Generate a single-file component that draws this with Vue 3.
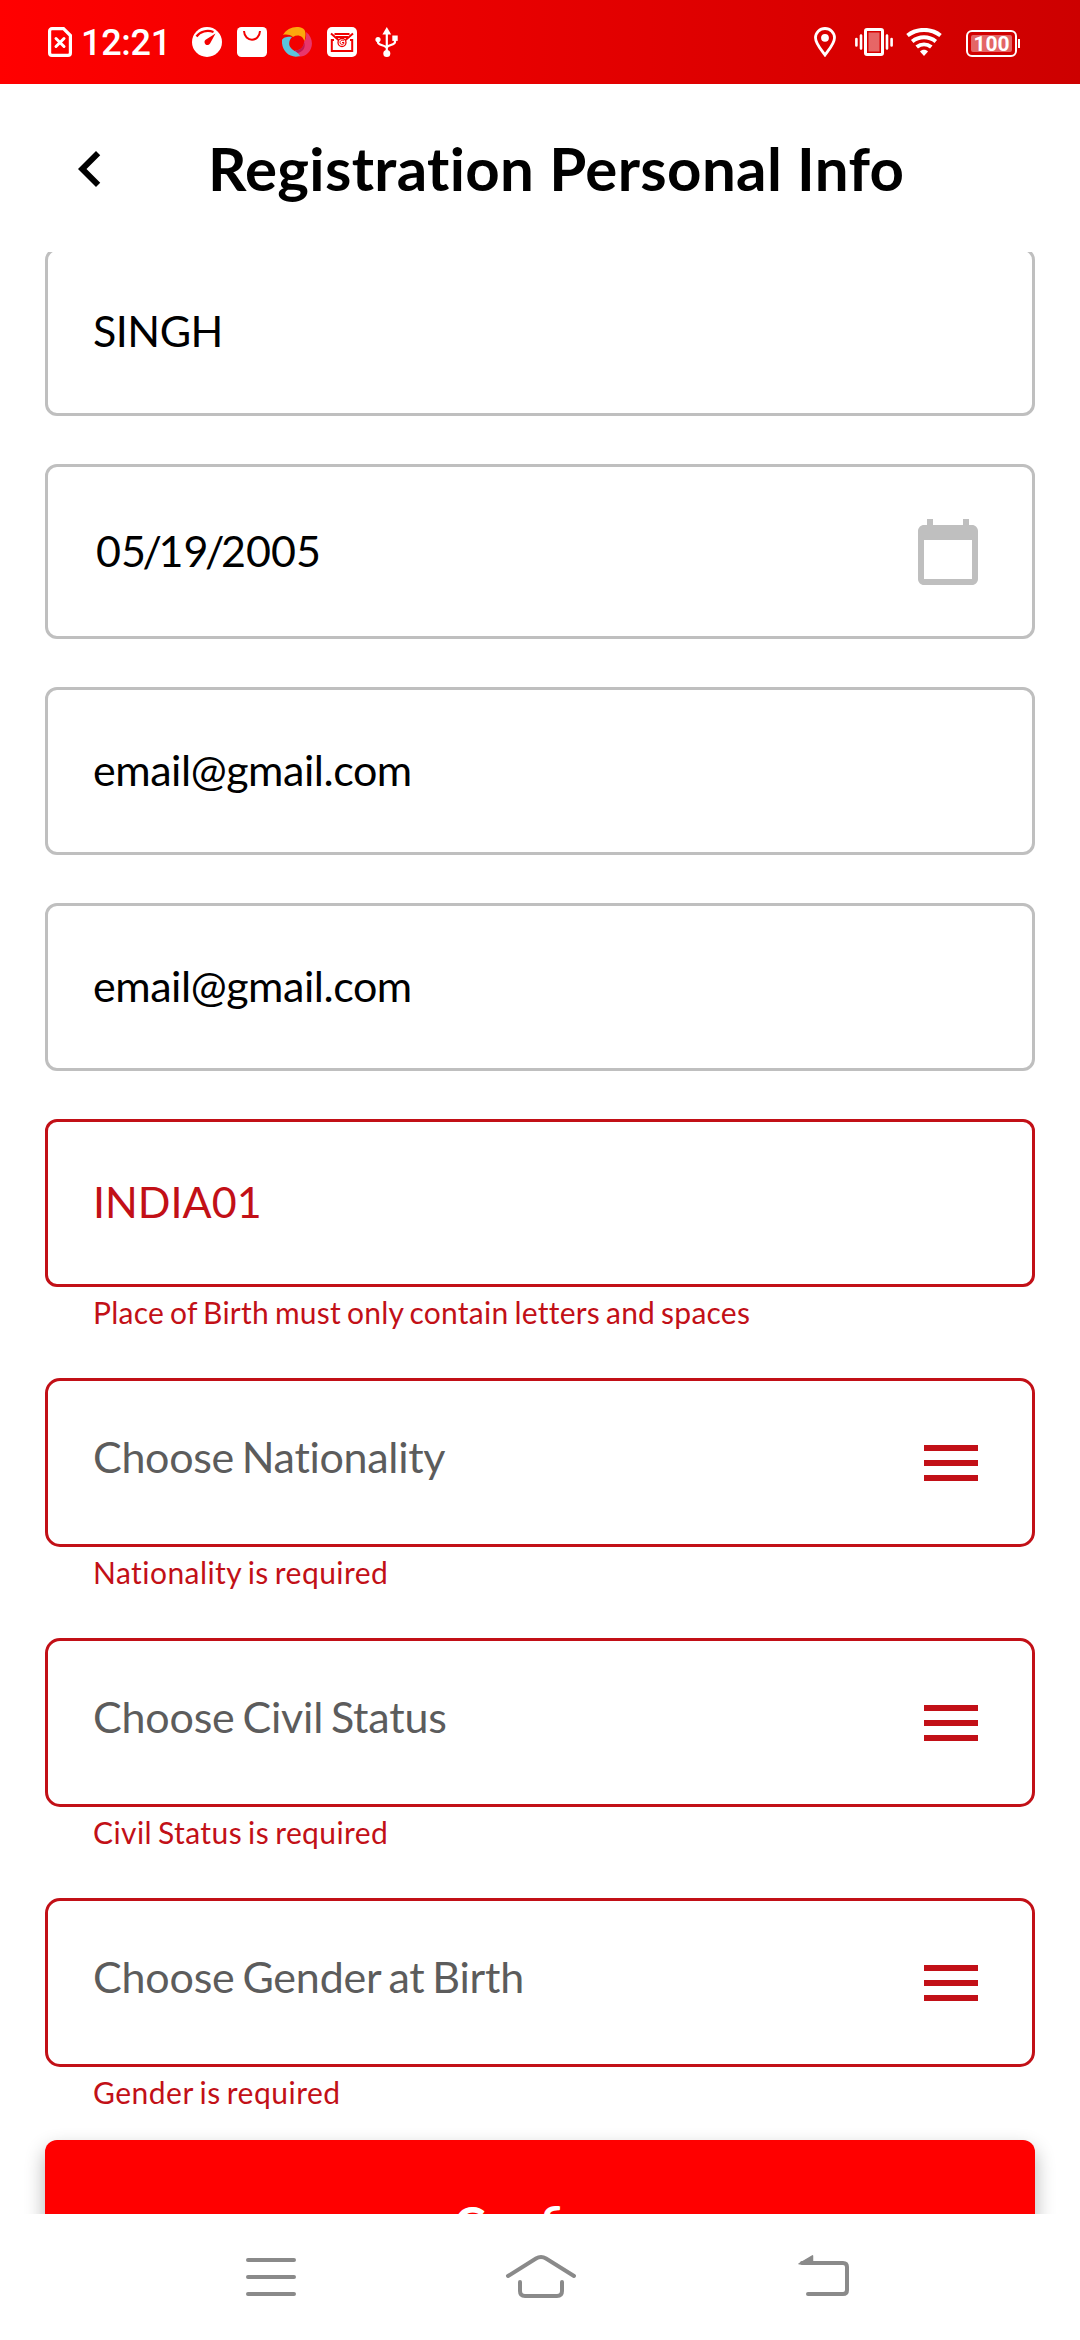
<script setup>
// tracking values are in pixels
const fields = [
  { kind: 'input', value: 'SINGH', tracking: -0.5 },
  { kind: 'date', value: '05/19/2005', tracking: 0 },
  { kind: 'input', value: 'email@gmail.com', tracking: -0.45 },
  { kind: 'input', value: 'email@gmail.com', tracking: -0.45 },
  { kind: 'input', value: 'INDIA01', tracking: 0, error: 'Place of Birth must only contain letters and spaces', errorTracking: 0.25 },
  { kind: 'select', value: 'Choose Nationality', tracking: -0.3, error: 'Nationality is required', errorTracking: 0.45 },
  { kind: 'select', value: 'Choose Civil Status', tracking: -0.2, error: 'Civil Status is required', errorTracking: 0.4 },
  { kind: 'select', value: 'Choose Gender at Birth', tracking: -0.2, error: 'Gender is required', errorTracking: 0.5 },
]
</script>

<template>
  <div class="screen">
    <div class="status">
      <svg class="sim" width="24" height="30" viewBox="0 0 24 30" fill="none" stroke="#fff">
        <path d="M4 1.6h11.5L22.4 8.5V26a2.4 2.4 0 0 1-2.4 2.4H4A2.4 2.4 0 0 1 1.6 26V4A2.4 2.4 0 0 1 4 1.6z" stroke-width="3.2" />
        <path d="M8 11.5l8 8M16 11.5l-8 8" stroke-width="3" stroke-linecap="round" />
      </svg>
      <span class="clock">12:21</span>
      <div class="notifications">
        <svg width="30" height="30" viewBox="0 0 30 30">
          <circle cx="15" cy="15" r="15" fill="#fff" />
          <path d="M4.5 9.5C8 4.5 15 2.500 21.5 5" fill="none" stroke="#f40000" stroke-width="2.2" />
          <path d="M23.500 6.500L18.200 16.300a3 3 0 1 1-4.600-3.600z" fill="#f40000" />
        </svg>
        <svg width="30" height="30" viewBox="0 0 30 30">
          <rect width="30" height="30" rx="4.500" fill="#fff" />
          <path d="M7 4c.5 11.500 15.500 11.500 16 0" fill="none" stroke="#f40000" stroke-width="2" />
        </svg>
        <svg width="30" height="30" viewBox="0 0 30 30">
          <path d="M1 8C5 1 14-2 21 1.500c3 2 3 6 1.500 13C21 9 16 7 11 10 8 7.500 4 7 1 8z" fill="#fca70d" />
          <path d="M24 5c7 5 8 15 2 21-4 4-8 4-10 3-2-1-3-3-3-6 5 1 9-3 9-8 2-3 2.500-6 2-10z" fill="#e8366c" />
          <path d="M13 23c5 1 9-3 9-8 2 4 0 11-8 11z" fill="#c41650" />
          <path d="M0 13c1-3 7-4 10-3-3 3-4 8-1 11 2 3 6 3 9 8-10 3-19-5-18-16z" fill="#5cc3dc" />
        </svg>
        <svg width="30" height="30" viewBox="0 0 30 30">
          <rect width="30" height="30" rx="5" fill="#fff" />
          <g fill="none" stroke="#f00000" stroke-width="2">
            <path d="M7.500 7h15M9 10h12M4 6.500l7.500 6.500M26 6.500L18.500 13M7 13H4.800v11h20.400V13H23" />
            <circle cx="15" cy="15.500" r="4" stroke-width="1.300" />
            <path d="M17 14c-1.500-1.500-4-.5-4 1.500s2.500 2.500 4 1v-1h-2" stroke-width="1" />
          </g>
        </svg>
        <svg width="30" height="30" viewBox="0 0 30 30" fill="#fff">
          <path d="M14.800 0l4.400 7.500h-8.800z" />
          <circle cx="14.800" cy="26.500" r="3.500" />
          <circle cx="6" cy="12.500" r="2.600" />
          <path d="M20.300 8.500h5.400v5.400h-5.400z" />
          <path d="M14.800 5v21M6 12v3.500c0 3 8.800 2.500 8.800 6M23 12v3c0 3.500-8.200 2.500-8.200 6" fill="none" stroke="#fff" stroke-width="2.200" />
        </svg>
      </div>
      <div class="system">
        <svg width="22" height="30" viewBox="0 0 22 30">
          <path d="M11 1.500c-5.300 0-9.500 4-9.500 9.300 0 6 6 12.200 9.500 17.200 3.500-5 9.500-11.200 9.500-17.200 0-5.300-4.200-9.300-9.500-9.300z" fill="none" stroke="#fff" stroke-width="2.800" />
          <circle cx="11" cy="10.800" r="3.900" fill="#fff" />
        </svg>
        <svg class="vibrate" width="38" height="28" viewBox="0 0 38 28">
          <rect x="10.500" y="1.500" width="17" height="25" rx="1.500" fill="none" stroke="#fff" stroke-width="3" />
          <rect x="13" y="4" width="12" height="20" fill="#fff" fill-opacity=".4" stroke="#d80000" />
          <path d="M1.400 11v6.500M6 7.500V20.500M32 7.500V20.500M36.600 11v6.500" stroke="#fff" stroke-width="2.600" stroke-linecap="round" />
        </svg>
        <svg class="wifi" width="36" height="28" viewBox="0 0 36 28" fill="none" stroke="#fff" stroke-width="4">
          <path d="M1.500 7.500c9.500-7.500 23.500-7.500 33 0M6.200 13.500c7-5.600 16.600-5.600 23.600 0M10.700 19c4.400-3.500 10.200-3.500 14.600 0" />
          <path d="M18 28l-4-4.500c2-2.200 6-2.200 8 0z" fill="#fff" stroke="none" />
        </svg>
        <div class="battery"><span class="charge">100</span></div>
        <i class="tip"></i>
      </div>
    </div>

    <header class="header">
      <svg class="back" width="72" height="72" viewBox="0 0 24 24">
        <path d="M15.410 7.410L14 6l-6 6 6 6 1.410-1.410L10.830 12z" />
      </svg>
      <h1>Registration Personal Info</h1>
    </header>

    <main class="form">
      <div v-for="(field, i) in fields" :key="i" class="item">
        <div class="box" :class="[field.kind, { invalid: field.error }]">
          <span class="value" :style="{ letterSpacing: field.tracking + 'px' }">
            <template v-if="field.kind === 'date'">
              <template v-for="(part, n) in field.value.split('/')" :key="n"><i v-if="n" class="slash">/</i>{{ part }}</template>
            </template>
            <template v-else>{{ field.value }}</template>
          </span>
          <svg v-if="field.kind === 'date'" class="icon" width="72" height="72" viewBox="0 0 24 24" fill="#bfbfbf">
            <path d="M20 3h-1V1h-2v2H7V1H5v2H4c-1.100 0-2 .9-2 2v16c0 1.100.9 2 2 2h16c1.100 0 2-.9 2-2V5c0-1.100-.9-2-2-2zm0 18H4V8h16v13z" />
          </svg>
          <svg v-if="field.kind === 'select'" class="icon" width="72" height="72" viewBox="0 0 24 24" fill="#c21017">
            <path d="M3 18h18v-2H3v2zm0-5h18v-2H3v2zm0-7v2h18V6H3z" />
          </svg>
        </div>
        <p v-if="field.error" class="error" :style="{ letterSpacing: field.errorTracking + 'px' }">{{ field.error }}</p>
      </div>
      <button class="confirm">Confirm</button>
    </main>

    <nav class="nav">
      <svg width="72" height="46" viewBox="0 0 72 46">
        <path d="M13 6h46M13 23h46M13 40h46" />
      </svg>
      <svg class="home" width="72" height="46" viewBox="0 0 72 46">
        <path d="M3 22L31 4.500q5-3 10 0L69 22M15 28v9q0 5 5 5h32q5 0 5-5V28" />
      </svg>
      <svg class="return" width="72" height="46" viewBox="0 0 72 46">
        <path d="M12 9h41q4 0 4 4v23q0 4-4 4H18" />
        <path d="M9 9.800l13.500-8v8z" class="solid" />
      </svg>
    </nav>
  </div>
</template>

<style>
body {
  background: #fff;
}
</style>

<style scoped>
.screen {
  display: flex;
  flex-direction: column;
  width: 1080px;
  height: 2340px;
  overflow: hidden;
  background: #fff;
  color: #000;
  font-family: Lato, "Liberation Sans", sans-serif;
  font-variant-ligatures: none;
}

svg {
  display: block;
  flex: none;
}

.status {
  display: flex;
  align-items: center;
  flex: none;
  height: 84px;
  padding: 0 60px 0 48px;
  background: linear-gradient(90deg, #f00, #cd0000);
}

.clock {
  width: 111px;
  padding: 2px 0 0 9px;
  font: 500 36px/40px Roboto, sans-serif;
  letter-spacing: -0.3px;
  color: #fff;
}

.notifications {
  display: flex;
  gap: 15px;
}

.system {
  display: flex;
  align-items: center;
  margin-left: auto;
}

.vibrate {
  margin-left: 19px;
}

.wifi {
  margin-left: 13px;
}

.battery {
  display: flex;
  box-sizing: border-box;
  width: 51px;
  height: 27px;
  margin: 3px 0 0 24px;
  padding: 3px;
  border: 2px solid #fff;
  border-radius: 6px;
}

.charge {
  flex: 1;
  border-radius: 2px;
  background: rgba(255, 255, 255, 0.4);
  color: #fff;
  text-align: center;
  font: 700 21px/18px Roboto, sans-serif;
}

.tip {
  width: 2px;
  height: 9px;
  margin: 3px 0 0 1px;
  background: #fff;
}

.header {
  display: flex;
  align-items: center;
  flex: none;
  height: 168px;
  padding-left: 54px;
}

.back {
  margin-top: 2px;
}

h1 {
  margin: 0 0 0 82px;
  font-size: 60px;
  font-weight: 700;
  line-height: 72px;
  letter-spacing: 0.35px;
  white-space: nowrap;
}

.form {
  display: flex;
  flex-direction: column;
  flex: none;
  box-sizing: border-box;
  height: 1962px;
  padding: 0 45px;
  overflow: hidden;
}

.item {
  flex: none;
  margin-bottom: 48px;
}

.item:first-child {
  margin-top: -4px;
}

.item:nth-last-child(2) {
  margin-bottom: 30px;
}

.box {
  display: flex;
  align-items: center;
  justify-content: space-between;
  box-sizing: border-box;
  height: 168px;
  padding: 0 45px;
  border: 3px solid #bfbfbf;
  border-radius: 12px;
}

.date {
  height: 175px;
  padding-left: 48px;
}

.select {
  height: 169px;
  border-radius: 15px;
}

.invalid {
  border-color: #c21017;
  color: #c21017;
}

.value {
  padding-bottom: 3px;
  font-size: 43px;
  line-height: 52px;
  word-spacing: -3px;
  white-space: nowrap;
}

.date .value {
  padding-bottom: 1px;
}

.slash {
  margin: 0 -3.4px;
  font-style: normal;
}

.select .value {
  padding-bottom: 12px;
  color: #5c5c5c;
}

.icon {
  margin-right: 3px;
}

.select .icon {
  margin-right: 0;
}

.error {
  height: 35px;
  margin: 0;
  padding: 8px 0 0 48px;
  color: #c21017;
  font-size: 30px;
  line-height: 35px;
  word-spacing: -2px;
}

.confirm {
  flex: none;
  height: 168px;
  padding: 0;
  border: 0;
  border-radius: 12px;
  background: #f00;
  box-shadow: 0 9px 20px rgba(0, 0, 0, 0.3);
  color: #fff;
  font: 700 48px/58px Lato, sans-serif;
  font-variant-ligatures: common-ligatures;
}

.nav {
  display: flex;
  flex: none;
  align-items: center;
  height: 126px;
  padding-left: 235px;
}

.home {
  margin-left: 198px;
}

.return {
  margin-left: 213px;
}

.nav path {
  fill: none;
  stroke: #8a8a8a;
  stroke-width: 4;
  stroke-linecap: round;
}

.nav .solid {
  fill: #8a8a8a;
  stroke-width: 1.500;
  stroke-linejoin: round;
}
</style>
